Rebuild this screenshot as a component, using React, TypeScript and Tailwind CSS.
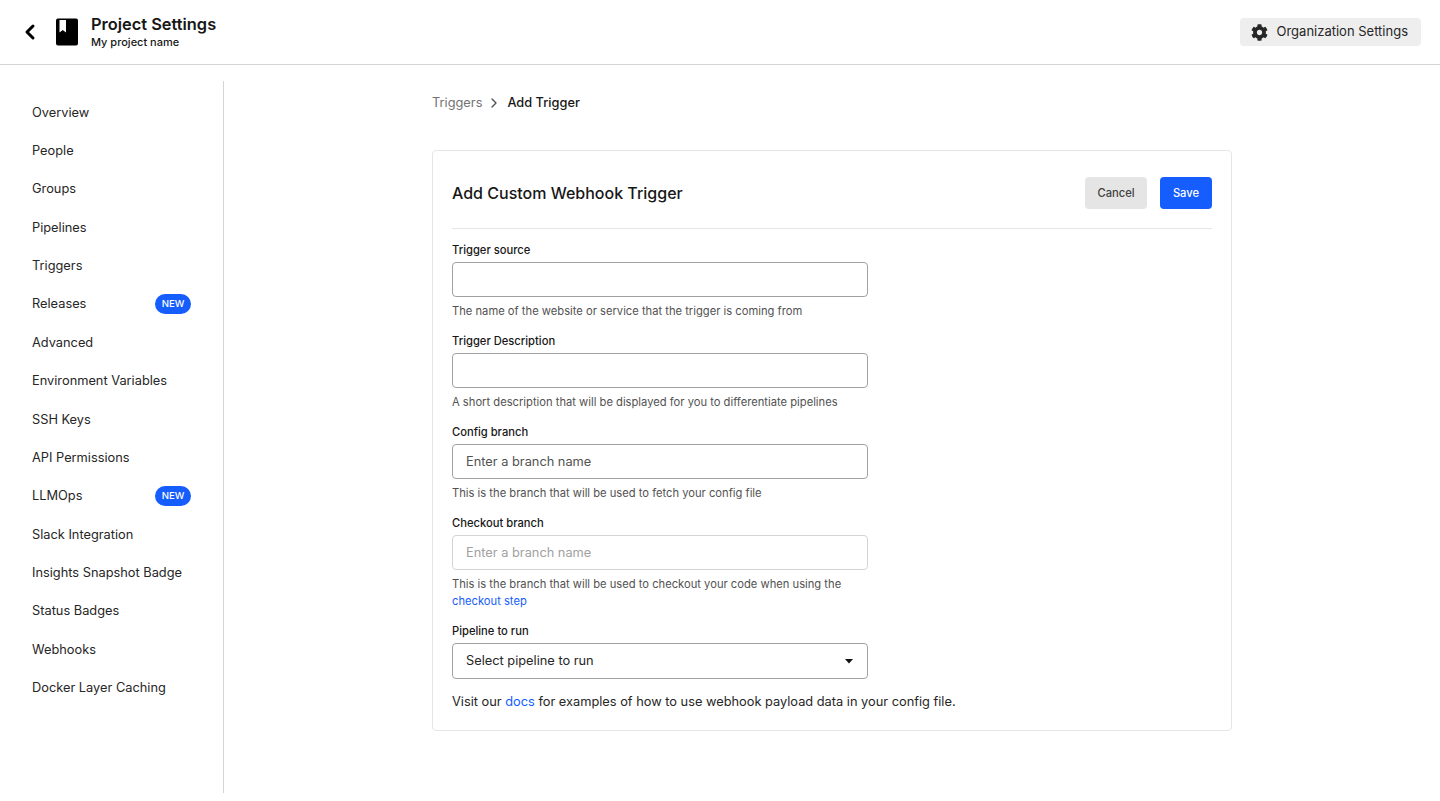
import { FaCog } from "react-icons/fa";
import { ChevronLeft, ChevronRight } from "lucide-react";

const navItems = [
  { label: "Overview" },
  { label: "People" },
  { label: "Groups" },
  { label: "Pipelines" },
  { label: "Triggers" },
  { label: "Releases", isNew: true },
  { label: "Advanced" },
  { label: "Environment Variables" },
  { label: "SSH Keys" },
  { label: "API Permissions" },
  { label: "LLMOps", isNew: true },
  { label: "Slack Integration" },
  { label: "Insights Snapshot Badge" },
  { label: "Status Badges" },
  { label: "Webhooks" },
  { label: "Docker Layer Caching" },
];

function Field({
  label,
  placeholder,
  inputClass = "border-neutral-400 placeholder:text-neutral-600",
  children,
}: {
  label: string;
  placeholder?: string;
  inputClass?: string;
  children: React.ReactNode;
}) {
  return (
    <div className="flex flex-col">
      <label className="text-[11.2px] font-medium leading-3.5 text-neutral-900">{label}</label>
      <input
        placeholder={placeholder}
        className={`mt-1.25 h-8.75 w-104 rounded-sm border bg-white px-3.25 text-[12.8px] outline-none ${inputClass}`}
      />
      <p className="mt-1.5 w-104 text-[11.2px] leading-4.25 text-neutral-600">{children}</p>
    </div>
  );
}

export default function App() {
  return (
    <div
      className="flex h-screen flex-col overflow-hidden bg-white text-neutral-900"
      style={{ fontFamily: "Inter, sans-serif" }}
    >
      {/* Top bar */}
      <header className="flex h-16.25 shrink-0 items-center justify-between border-b border-neutral-300 pl-4.5 pr-4.75">
        <div className="flex items-center">
          <ChevronLeft className="h-6 w-6 text-black" strokeWidth={3} />
          <svg className="ml-3.5 h-7 w-5.5" viewBox="0 0 22 28">
            <path
              fillRule="evenodd"
              d="M2 0.5h18a2 2 0 0 1 2 2v23a2 2 0 0 1-2 2H2a2 2 0 0 1-2-2v-23a2 2 0 0 1 2-2zM3.5 2v12.5l3.25-2.5 3.25 2.5V2z"
              fill="#000"
            />
          </svg>
          <div className="ml-3.25 flex flex-col">
            <span className="text-[16.4px] font-semibold leading-5">Project Settings</span>
            <span className="text-[11px] font-medium leading-4">My project name</span>
          </div>
        </div>
        <button className="flex h-7 items-center gap-2 rounded-sm bg-[#eeeeee] pl-2.75 pr-3.25 text-[13px] text-neutral-800">
          <FaCog className="h-4.25 w-4.25" />
          Organization Settings
        </button>
      </header>

      <div className="flex min-h-0 flex-1">
        {/* Sidebar */}
        <nav className="mb-2 mt-4 flex w-56 shrink-0 flex-col border-r border-neutral-300 pb-21.5 pl-8 pr-8 pt-3">
          {navItems.map((item) => (
            <div key={item.label} className="flex flex-1 items-center justify-between">
              <span className="text-[12.8px] text-neutral-800">{item.label}</span>
              {item.isNew && (
                <span className="flex h-5 w-9 items-center justify-center rounded-full bg-blue-600 text-[9.6px] font-medium text-white">
                  NEW
                </span>
              )}
            </div>
          ))}
        </nav>

        {/* Main */}
        <main className="flex flex-1 justify-center pt-7">
          <div className="flex w-200 flex-col">
            <div className="flex h-5 items-center text-[12.8px]">
              <span className="text-neutral-500">Triggers</span>
              <ChevronRight className="ml-1 mr-1.25 h-4 w-4 text-neutral-600" strokeWidth={2} />
              <span className="font-medium text-neutral-900">Add Trigger</span>
            </div>

            <div className="mt-9.25 rounded-sm border border-neutral-200 px-4.75 pb-4.5 pt-6.5">
              <div className="flex items-center justify-between border-b border-neutral-200 pb-4.75">
                <h1 className="text-base font-medium">Add Custom Webhook Trigger</h1>
                <div className="flex gap-3.25">
                  <button className="h-8 w-15.5 rounded-sm bg-neutral-200 text-[11.2px] font-medium text-neutral-700">
                    Cancel
                  </button>
                  <button className="h-8 w-13 rounded-sm bg-blue-600 text-[11.2px] font-medium text-white">
                    Save
                  </button>
                </div>
              </div>

              <div className="mt-3.5 flex flex-col gap-3.5">
                <Field label="Trigger source">The name of the website or service that the trigger is coming from</Field>
                <Field label="Trigger Description">A short description that will be displayed for you to differentiate pipelines</Field>
                <Field label="Config branch" placeholder="Enter a branch name">
                  This is the branch that will be used to fetch your config file
                </Field>
                <Field
                  label="Checkout branch"
                  placeholder="Enter a branch name"
                  inputClass="border-neutral-300 placeholder:text-neutral-400"
                >
                  This is the branch that will be used to checkout your code when using the{" "}
                  <a className="text-blue-600">checkout step</a>
                </Field>
                <div className="flex flex-col">
                  <label className="text-[11.2px] font-medium leading-3.5 text-neutral-900">Pipeline to run</label>
                  <div className="mt-1.25 flex h-9 w-104 items-center justify-between rounded-sm border border-neutral-400 pl-3.25 pr-3.5 text-[12.8px] text-neutral-800">
                    Select pipeline to run
                    <svg className="h-2 w-2" viewBox="0 0 8 8">
                      <path d="M0 2h8L4 6.5z" fill="#111" />
                    </svg>
                  </div>
                </div>
              </div>

              <p className="mt-3.25 text-[12.8px] leading-5 text-neutral-800">
                Visit our <a className="text-blue-600">docs</a> for examples of how to use webhook payload data in your config file.
              </p>
            </div>
          </div>
        </main>
      </div>
    </div>
  );
}
